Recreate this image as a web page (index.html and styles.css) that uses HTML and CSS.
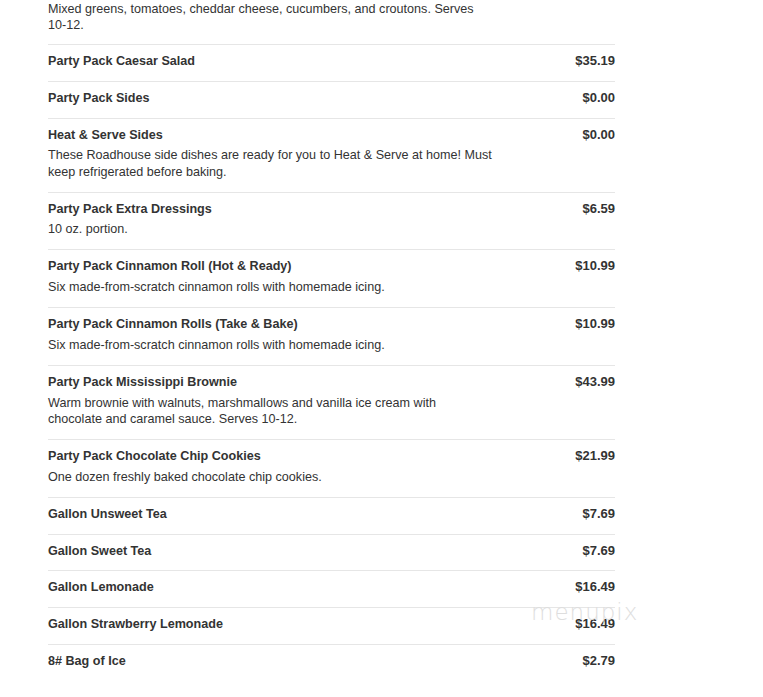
FILE: index.html
```html
<!DOCTYPE html>
<html>
<head>
<meta charset="utf-8">
<link rel="stylesheet" href="styles.css">
</head>
<body>
<div class="menu">
  <div class="lead">
    <p class="desc">Mixed greens, tomatoes, cheddar cheese, cucumbers, and croutons. Serves 10-12.</p>
  </div>
  <div class="item">
    <div class="head"><span class="name">Party Pack Caesar Salad</span><span class="price">$35.19</span></div>
  </div>
  <div class="item">
    <div class="head"><span class="name">Party Pack Sides</span><span class="price">$0.00</span></div>
  </div>
  <div class="item">
    <div class="head"><span class="name">Heat &amp; Serve Sides</span><span class="price">$0.00</span></div>
    <p class="desc">These Roadhouse side dishes are ready for you to Heat &amp; Serve at home! Must keep refrigerated before baking.</p>
  </div>
  <div class="item">
    <div class="head"><span class="name">Party Pack Extra Dressings</span><span class="price">$6.59</span></div>
    <p class="desc">10 oz. portion.</p>
  </div>
  <div class="item">
    <div class="head"><span class="name">Party Pack Cinnamon Roll (Hot &amp; Ready)</span><span class="price">$10.99</span></div>
    <p class="desc">Six made-from-scratch cinnamon rolls with homemade icing.</p>
  </div>
  <div class="item">
    <div class="head"><span class="name">Party Pack Cinnamon Rolls (Take &amp; Bake)</span><span class="price">$10.99</span></div>
    <p class="desc">Six made-from-scratch cinnamon rolls with homemade icing.</p>
  </div>
  <div class="item">
    <div class="head"><span class="name">Party Pack Mississippi Brownie</span><span class="price">$43.99</span></div>
    <p class="desc">Warm brownie with walnuts, marshmallows and vanilla ice cream with chocolate and caramel sauce. Serves 10-12.</p>
  </div>
  <div class="item">
    <div class="head"><span class="name">Party Pack Chocolate Chip Cookies</span><span class="price">$21.99</span></div>
    <p class="desc">One dozen freshly baked chocolate chip cookies.</p>
  </div>
  <div class="item">
    <div class="head"><span class="name">Gallon Unsweet Tea</span><span class="price">$7.69</span></div>
  </div>
  <div class="item">
    <div class="head"><span class="name">Gallon Sweet Tea</span><span class="price">$7.69</span></div>
  </div>
  <div class="item">
    <div class="head"><span class="name">Gallon Lemonade</span><span class="price">$16.49</span></div>
  </div>
  <div class="item">
    <div class="head"><span class="name">Gallon Strawberry Lemonade</span><span class="price">$16.49</span></div>
  </div>
  <div class="item">
    <div class="head"><span class="name">8# Bag of Ice</span><span class="price">$2.79</span></div>
  </div>
  <div class="watermark">menupix</div>
</div>
</body>
</html>
```

FILE: styles.css
```css
html, body {
  margin: 0;
  padding: 0;
  background: #fff;
}
body {
  font-family: "Liberation Sans", Arial, sans-serif;
  color: #333;
}
.menu {
  position: relative;
  width: 567px;
  margin-left: 48px;
  padding-top: 1px;
}
.lead {
  padding-bottom: 11px;
}
.lead .desc {
  margin: 0;
  line-height: 16px;
}
.item {
  border-top: 1px solid #e6e6e6;
  padding: 8px 0 11.8px;
}
.head {
  display: flex;
  justify-content: space-between;
  font-size: 12.6px;
  font-weight: bold;
  line-height: 16px;
}
.price {
  font-size: 13px;
}
.desc {
  margin: 4.8px 0 0;
  width: 445px;
  font-size: 12.6px;
  line-height: 16.2px;
}
.watermark {
  position: absolute;
  left: 483px;
  top: 599px;
  font-size: 23px;
  letter-spacing: 1px;
  color: #dedede;
  font-family: "DejaVu Sans", sans-serif;
  font-weight: 200;
}
```
